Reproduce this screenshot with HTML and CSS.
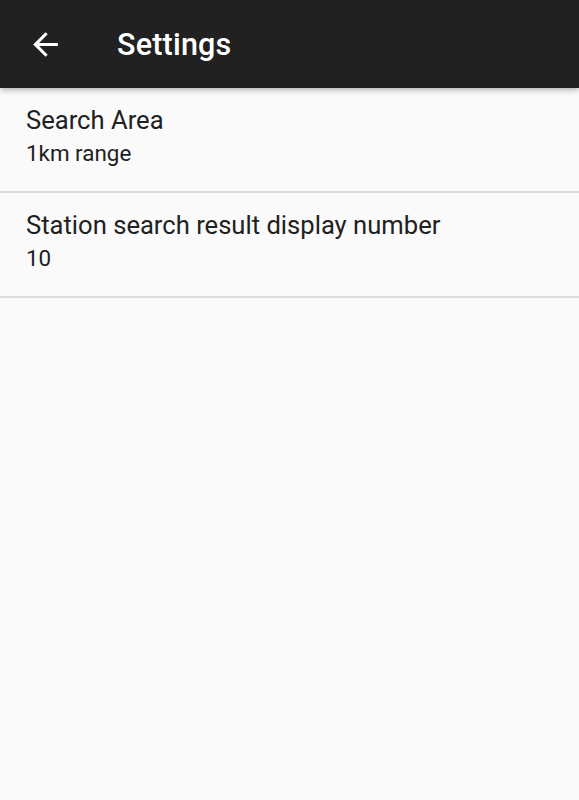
FILE: index.html
```html
<!DOCTYPE html>
<html lang="en">

<head>
    <meta charset="UTF-8">
    <meta name="viewport" content="width=device-width, initial-scale=1.0">
    <title>Settings</title>
    <link rel="stylesheet" href="styles.css">
</head>

<body>

    <div id="toolbar">
        <button id="backButton" aria-label="Back">
            <svg viewBox="0 0 24 24" width="37" height="37">
                <path d="M20 11H7.83l5.59-5.59L12 4l-8 8 8 8 1.41-1.41L7.83 13H20v-2z" fill="#ffffff"/>
            </svg>
        </button>
        <div id="toolbarTitle">Settings</div>
    </div>

    <div id="settingsList">
        <div class="settingItem">
            <div class="settingTitle">Search Area</div>
            <div class="settingSummary">1km range</div>
        </div>
        <div class="settingItem">
            <div class="settingTitle">Station search result display number</div>
            <div class="settingSummary">10</div>
        </div>
    </div>

</body>

</html>
```

FILE: styles.css
```css
body {
    margin: 0;
    font-family: Roboto, "Noto Sans", sans-serif;
    background: #fafafa;
    height: 100vh;
    display: flex;
    flex-direction: column;
}

#toolbar {
    height: 88px;
    background: #212121;
    display: flex;
    align-items: center;
    box-shadow: 0 2px 6px rgba(0, 0, 0, 0.3);
    position: relative;      /* keep the shadow above the list */
    z-index: 1;
}

#backButton {
    width: 37px;
    height: 37px;
    margin-left: 27px;
    padding: 0;
    border: none;
    background: none;
    display: flex;
}

#toolbarTitle {
    margin-left: 53px;
    color: #ffffff;
    font-size: 30.5px;
    font-weight: 500;
    letter-spacing: 0.2px;
}

.settingItem {
    padding: 16px 26px 21px;
    border-bottom: 2px solid #dedede;
}

.settingTitle {
    color: #212121;
    font-size: 25.6px;
    line-height: 32px;
}

.settingSummary {
    color: #212121;
    font-size: 22.4px;
    line-height: 34px;
}
```
